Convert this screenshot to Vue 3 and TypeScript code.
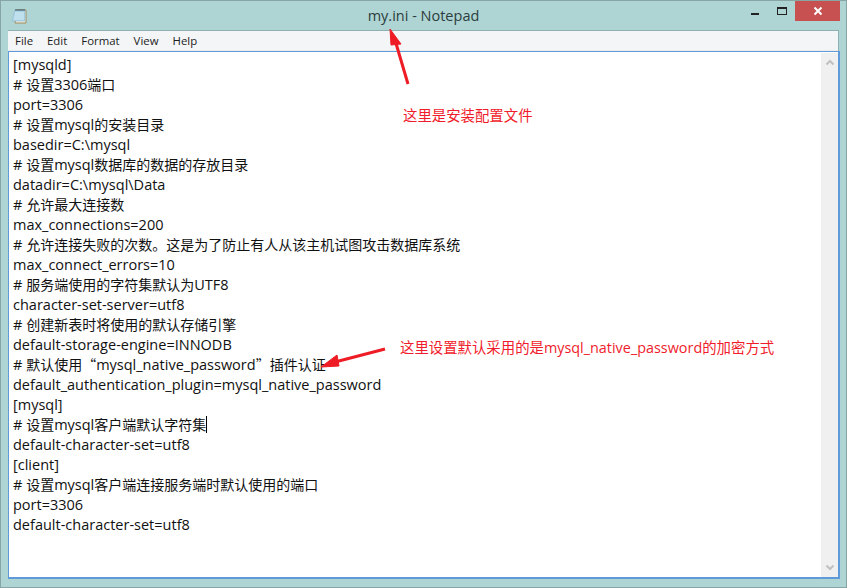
<script setup lang="ts">
interface Seg { text: string; cjk: boolean }

const menus: string[] = ['File', 'Edit', 'Format', 'View', 'Help']
const lines: string[] = [
  '[mysqld]',
  '# 设置3306端口',
  'port=3306',
  '# 设置mysql的安装目录',
  'basedir=C:\\mysql',
  '# 设置mysql数据库的数据的存放目录',
  'datadir=C:\\mysql\\Data',
  '# 允许最大连接数',
  'max_connections=200',
  '# 允许连接失败的次数。这是为了防止有人从该主机试图攻击数据库系统',
  'max_connect_errors=10',
  '# 服务端使用的字符集默认为UTF8',
  'character-set-server=utf8',
  '# 创建新表时将使用的默认存储引擎',
  'default-storage-engine=INNODB',
  '# 默认使用“mysql_native_password”插件认证',
  'default_authentication_plugin=mysql_native_password',
  '[mysql]',
  '# 设置mysql客户端默认字符集',
  'default-character-set=utf8',
  '[client]',
  '# 设置mysql客户端连接服务端时默认使用的端口',
  'port=3306',
  'default-character-set=utf8',
]

function split(line: string): Seg[] {
  const parts = line.match(/[\u201c\u201d\u3000-\u9fff]+|[^\u201c\u201d\u3000-\u9fff]+/g) ?? []
  return parts.map((text) => ({ text, cjk: /[\u201c\u201d\u3000-\u9fff]/.test(text) }))
}
</script>

<template>
  <div class="window">
    <header class="titlebar">
      <svg class="app-icon" width="16" height="16" viewBox="0 0 16 16">
        <path d="M6 2h9v13H4z" fill="#f2efe2" stroke="#a08a5a" />
        <path d="M4 2h10v11H1z" fill="#a9d3e6" stroke="#8fc0d6" stroke-width="0.6" />
        <path d="M4 5h9M3.6 7h9.4M3 9h10M2.6 11h10.4" stroke="#d8ecf4" />
        <path d="M5 3V1M7 3V1M9 3V1M11 3V1M13 3V1" stroke="#3e4a50" />
      </svg>
      <div class="title">my.ini - Notepad</div>
      <div class="controls">
        <div class="ctl"><span class="min"></span></div>
        <div class="ctl"><span class="max"></span></div>
        <div class="close">
          <svg width="10" height="10" viewBox="0 0 10 10"><path d="M1.5 1.5l7 7M8.5 1.5l-7 7" stroke="#fff" stroke-width="2" /></svg>
        </div>
      </div>
    </header>
    <nav class="menubar">
      <span v-for="m in menus" :key="m" class="menu">{{ m }}</span>
    </nav>
    <main class="editor">
      <div class="text">
        <div v-for="(l, i) in lines" :key="i" class="line"><span v-for="(s, j) in split(l)" :key="j" :class="s.cjk ? 'cjk' : 'latin'">{{ s.text }}</span><span v-if="i === 18" class="caret"></span></div>
      </div>
      <aside class="scrollbar">
        <svg width="8" height="7" viewBox="0 0 8 7"><path d="M0.5 5.5L4 2l3.5 3.5" fill="none" stroke="#c0c0c0" stroke-width="2" /></svg>
        <svg width="8" height="7" viewBox="0 0 8 7"><path d="M0.5 1.5L4 5l3.5-3.5" fill="none" stroke="#c0c0c0" stroke-width="2" /></svg>
      </aside>
    </main>
    <div class="note note-a">这里是安装配置文件</div>
    <div class="note note-b">这里设置默认采用的是mysql_native_password的加密方式</div>
    <svg class="arrows" width="847" height="588" viewBox="0 0 847 588">
      <path d="M408 84L395 40" stroke="#ee1c25" stroke-width="3" fill="none" />
      <path d="M390 29L401 44L391 45Z" fill="#ee1c25" stroke="#ee1c25" />
      <path d="M385 349L335 362" stroke="#ee1c25" stroke-width="3" fill="none" />
      <path d="M321 367L337 355L339 366Z" fill="#ee1c25" stroke="#ee1c25" />
    </svg>
  </div>
</template>

<style scoped>
.window {
  position: relative;
  width: 847px;
  height: 588px;
  box-sizing: border-box;
  border: 1px solid #88a5a6;
  background: #aed4d3;
  padding: 0 7px 8px;
  display: flex;
  flex-direction: column;
  overflow: hidden;
  font-family: "Open Sans", "Noto Sans CJK SC", sans-serif;
}
.titlebar {
  height: 29px;
  margin: 0 -7px;
  flex: none;
  display: flex;
  align-items: center;
  position: relative;
}
.app-icon { margin: 0 0 0 10px; }
.title {
  position: absolute;
  left: 0;
  right: 0;
  top: 5px;
  text-align: center;
  font-size: 14.5px;
  line-height: 20px;
  color: #2c3e40;
}
.controls {
  margin-left: auto;
  margin-right: 6px;
  height: 20px;
  align-self: flex-start;
  display: flex;
}
.ctl {
  width: 26px;
  height: 20px;
  position: relative;
}
.min {
  position: absolute;
  left: 8px;
  top: 12px;
  width: 8px;
  height: 2px;
  background: #222;
}
.max {
  position: absolute;
  left: 8px;
  top: 6px;
  width: 8px;
  height: 5px;
  border: 1px solid #222;
  border-top-width: 2px;
}
.close {
  width: 45px;
  height: 20px;
  background: #c75050;
  display: flex;
  align-items: center;
  justify-content: center;
}
.menubar {
  height: 20px;
  flex: none;
  background: #f4f5f7;
  border-top: 1px solid #8fb0b1;
  border-right: 1px solid #8fb0b1;
  box-shadow: inset 0 -1px 0 #ececec;
  display: flex;
  align-items: center;
  gap: 14px;
  padding-left: 7px;
  font-size: 11.4px;
  color: #1c1c1c;
}
.menu { line-height: 20px; }
.editor {
  flex: 1;
  min-height: 0;
  background: #fff;
  border: 1px solid #5e9bd8;
  border-width: 1px 2px 2px 1px;
  display: flex;
  margin-right: -1px;
}
.text {
  flex: 1;
  padding: 3px 0 0 4px;
  font-size: 14px;
  line-height: 20px;
  color: #111;
  white-space: pre;
}
.line { height: 20px; }
.latin { font-size: 14.5px; line-height: 0; }
.cjk { font-size: 14px; line-height: 0; font-family: "Noto Sans CJK SC", sans-serif; }
.caret {
  display: inline-block;
  width: 1px;
  height: 17px;
  background: #000;
  vertical-align: -3px;
}
.scrollbar {
  width: 17px;
  margin-top: 1px;
  background: #f0f0f0;
  display: flex;
  flex-direction: column;
  justify-content: space-between;
  align-items: center;
  padding: 6px 0;
  box-sizing: border-box;
}
.note {
  position: absolute;
  font-size: 14.4px;
  line-height: 20px;
  color: #f01c2c;
  white-space: nowrap;
}
.note-a { left: 402px; top: 105px; }
.note-b { left: 399px; top: 337px; }
.arrows { position: absolute; left: -1px; top: -1px; pointer-events: none; }
</style>
